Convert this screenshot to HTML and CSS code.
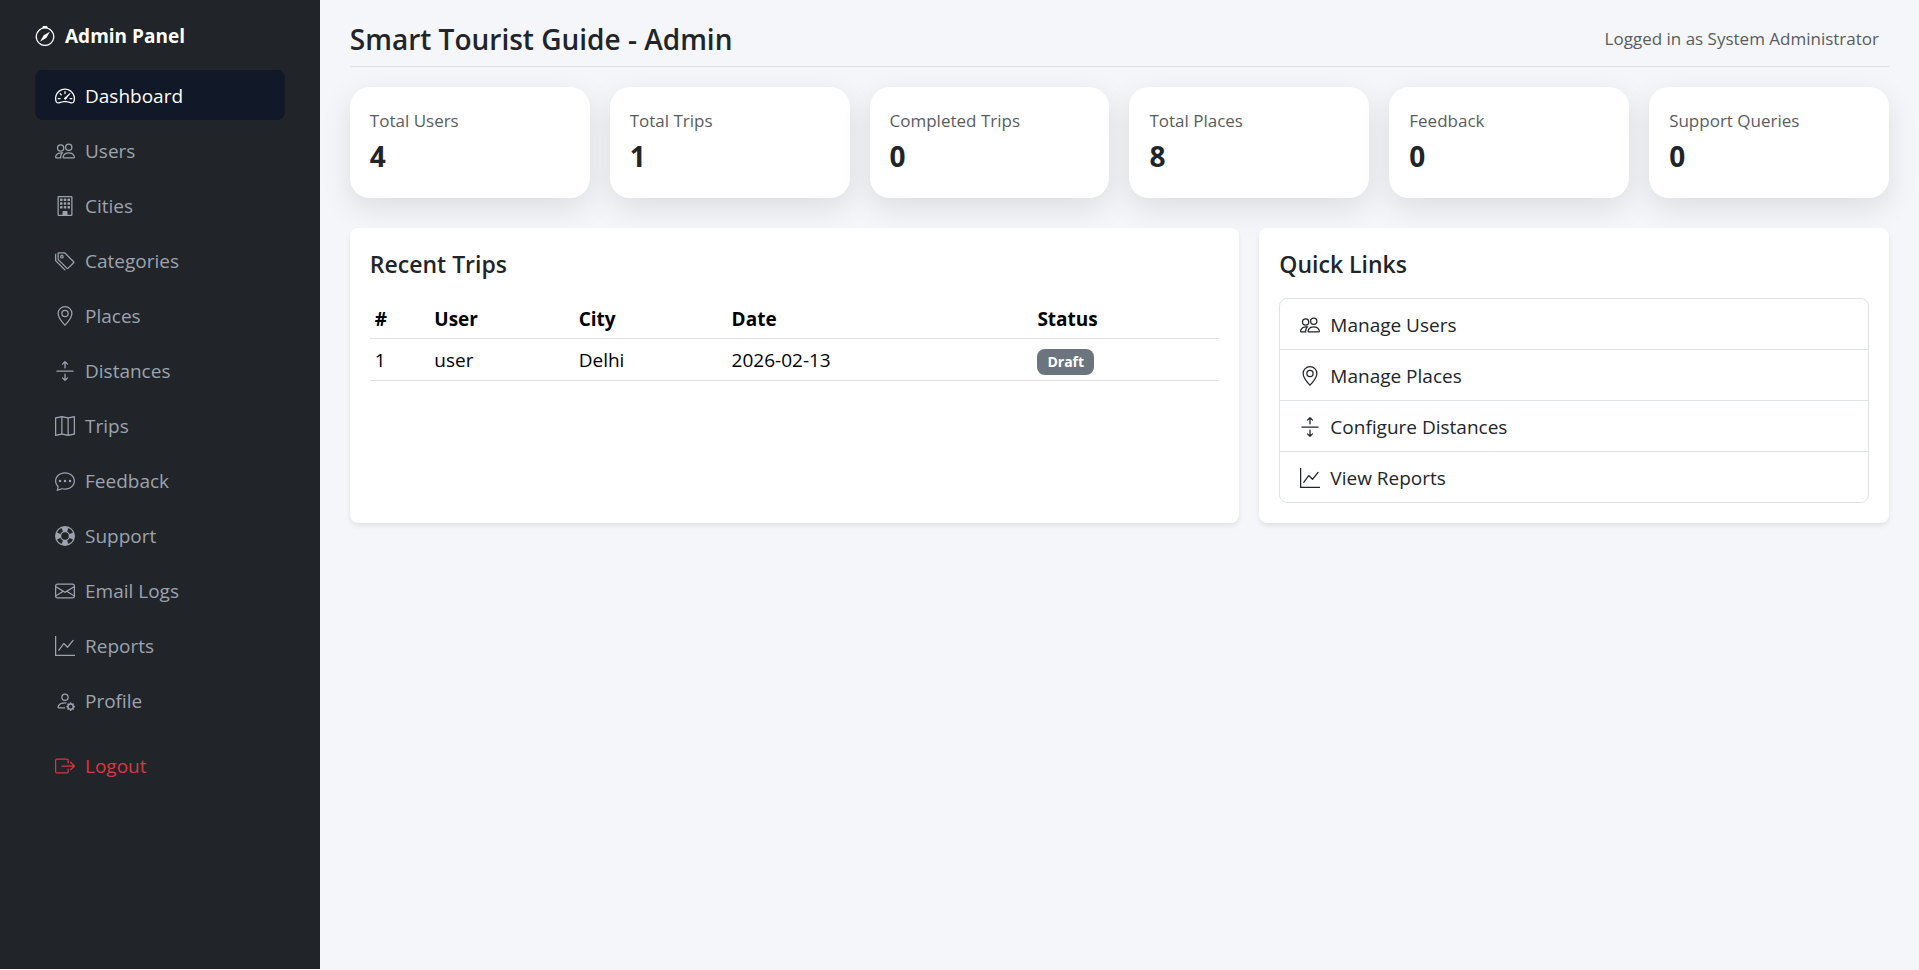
FILE: index.html
```
<!DOCTYPE html>
<html lang="en">
<head>
	<meta charset="UTF-8">
	<meta name="viewport" content="width=device-width, initial-scale=1">
	<title>Smart Tourist Guide - Admin</title>
	<link rel="stylesheet" href="styles.css">
</head>
<body>
	<!-- icon sprite -->
	<svg class="sprite" xmlns="http://www.w3.org/2000/svg">
		<symbol id="compass" viewBox="0 0 16 16">
			<path d="M8 16.016a7.5 7.5 0 0 0 1.962-14.74A1 1 0 0 0 9 0H7a1 1 0 0 0-.962 1.276A7.5 7.5 0 0 0 8 16.016m6.5-7.5a6.5 6.5 0 1 1-13 0 6.5 6.5 0 0 1 13 0"/>
			<path d="m6.94 7.44 4.95-2.83-2.83 4.95-4.949 2.83 2.828-4.95z"/>
		</symbol>
		<symbol id="speedometer" viewBox="0 0 16 16">
			<path d="M8 4a.5.5 0 0 1 .5.5V6a.5.5 0 0 1-1 0V4.5A.5.5 0 0 1 8 4M3.732 5.732a.5.5 0 0 1 .707 0l.915.914a.5.5 0 1 1-.708.708l-.914-.915a.5.5 0 0 1 0-.707M2 10a.5.5 0 0 1 .5-.5h1.586a.5.5 0 0 1 0 1H2.5A.5.5 0 0 1 2 10m9.5 0a.5.5 0 0 1 .5-.5h1.5a.5.5 0 0 1 0 1H12a.5.5 0 0 1-.5-.5m.754-4.246a.39.39 0 0 0-.527-.02L7.547 9.31a.91.91 0 1 0 1.302 1.258l3.434-4.297a.39.39 0 0 0-.029-.518z"/>
			<path fill-rule="evenodd" d="M0 10a8 8 0 1 1 15.547 2.661c-.442 1.253-1.845 1.602-2.932 1.25C11.309 13.488 9.475 13 8 13c-1.474 0-3.31.488-4.615.911-1.087.352-2.49.003-2.932-1.25A8 8 0 0 1 0 10m8-7a7 7 0 0 0-6.603 9.329c.203.575.923.876 1.68.63C4.397 12.533 6.358 12 8 12s3.604.532 4.923.96c.757.245 1.477-.056 1.68-.631A7 7 0 0 0 8 3"/>
		</symbol>
		<symbol id="people" viewBox="0 0 16 16">
			<path d="M15 14s1 0 1-1-1-4-5-4-5 3-5 4 1 1 1 1zm-7.978-1L7 12.996c.001-.264.167-1.03.76-1.72C8.312 10.629 9.282 10 11 10c1.717 0 2.687.63 3.24 1.276.593.69.758 1.457.76 1.72l-.008.002-.014.002zM11 7a2 2 0 1 0 0-4 2 2 0 0 0 0 4m3-2a3 3 0 1 1-6 0 3 3 0 0 1 6 0M6.936 9.28a6 6 0 0 0-1.23-.247A7 7 0 0 0 5 9c-4 0-5 3-5 4q0 1 1 1h4.216A2.24 2.24 0 0 1 5 13c0-1.01.377-2.042 1.09-2.904.243-.294.526-.569.846-.816M4.92 10A5.5 5.5 0 0 0 4 13H1c0-.26.164-1.03.76-1.724.545-.636 1.492-1.256 3.16-1.275ZM1.5 5.5a3 3 0 1 1 6 0 3 3 0 0 1-6 0m3-2a2 2 0 1 0 0 4 2 2 0 0 0 0-4"/>
		</symbol>
		<symbol id="building" viewBox="0 0 16 16">
			<path fill-rule="evenodd" d="M2 1a1 1 0 0 1 1-1h10a1 1 0 0 1 1 1v14a1 1 0 0 1-1 1H3a1 1 0 0 1-1-1zm11 0H3v14h3v-2.5a.5.5 0 0 1 .5-.5h3a.5.5 0 0 1 .5.5V15h3z"/>
			<rect x="4" y="2" width="2" height="2" rx=".5"/><rect x="7" y="2" width="2" height="2" rx=".5"/><rect x="10" y="2" width="2" height="2" rx=".5"/>
			<rect x="4" y="5" width="2" height="2" rx=".5"/><rect x="7" y="5" width="2" height="2" rx=".5"/><rect x="10" y="5" width="2" height="2" rx=".5"/>
			<rect x="4" y="8" width="2" height="2" rx=".5"/><rect x="7" y="8" width="2" height="2" rx=".5"/><rect x="10" y="8" width="2" height="2" rx=".5"/>
		</symbol>
		<symbol id="tags" viewBox="0 0 16 16">
			<path d="M3 2v4.586l7 7L14.586 9l-7-7zM2 2a1 1 0 0 1 1-1h4.586a1 1 0 0 1 .707.293l7 7a1 1 0 0 1 0 1.414l-4.586 4.586a1 1 0 0 1-1.414 0l-7-7A1 1 0 0 1 2 6.586z"/>
			<path d="M5.5 5a.5.5 0 1 1 0-1 .5.5 0 0 1 0 1m0 1a1.5 1.5 0 1 0 0-3 1.5 1.5 0 0 0 0 3M1 7.086a1 1 0 0 0 .293.707L8.75 15.25l-.043.043a1 1 0 0 1-1.414 0l-7-7A1 1 0 0 1 0 7.586V3a1 1 0 0 1 1-1z"/>
		</symbol>
		<symbol id="geo" viewBox="0 0 16 16">
			<path d="M12.166 8.94c-.524 1.062-1.234 2.12-1.96 3.07A32 32 0 0 1 8 14.58a32 32 0 0 1-2.206-2.57c-.726-.95-1.436-2.008-1.96-3.07C3.304 7.867 3 6.862 3 6a5 5 0 0 1 10 0c0 .862-.305 1.867-.834 2.94M8 16s6-5.686 6-10A6 6 0 0 0 2 6c0 4.314 6 10 6 10"/>
			<path d="M8 8a2 2 0 1 1 0-4 2 2 0 0 1 0 4m0 1a3 3 0 1 0 0-6 3 3 0 0 0 0 6"/>
		</symbol>
		<symbol id="expand" viewBox="0 0 16 16">
			<path d="M1 8a.5.5 0 0 1 .5-.5h13a.5.5 0 0 1 0 1h-13A.5.5 0 0 1 1 8M7.646.146a.5.5 0 0 1 .708 0l2 2a.5.5 0 0 1-.708.708L8.5 1.707V5.5a.5.5 0 0 1-1 0V1.707L6.354 2.854a.5.5 0 1 1-.708-.708zM8 10a.5.5 0 0 1 .5.5v3.793l1.146-1.147a.5.5 0 0 1 .708.708l-2 2a.5.5 0 0 1-.708 0l-2-2a.5.5 0 0 1 .708-.708L7.5 14.293V10.5A.5.5 0 0 1 8 10"/>
		</symbol>
		<symbol id="map" viewBox="0 0 16 16">
			<path fill-rule="evenodd" d="M15.817.113A.5.5 0 0 1 16 .5v14a.5.5 0 0 1-.402.49l-5 1a.5.5 0 0 1-.196 0L5.5 15.01l-4.902.98A.5.5 0 0 1 0 15.5v-14a.5.5 0 0 1 .402-.49l5-1a.5.5 0 0 1 .196 0L10.5.99l4.902-.98a.5.5 0 0 1 .415.103M10 1.91l-4-.8v12.98l4 .8zm1 12.98 4-.8V1.11l-4 .8zm-6-.8V1.11l-4 .8v12.98z"/>
		</symbol>
		<symbol id="chat" viewBox="0 0 16 16">
			<path d="M5 8a1 1 0 1 1-2 0 1 1 0 0 1 2 0m4 0a1 1 0 1 1-2 0 1 1 0 0 1 2 0m3 1a1 1 0 1 0 0-2 1 1 0 0 0 0 2"/>
			<path d="m2.165 15.803.02-.004c1.83-.363 2.948-.842 3.468-1.105A9 9 0 0 0 8 15c4.418 0 8-3.134 8-7s-3.582-7-8-7-8 3.134-8 7c0 1.76.743 3.37 1.97 4.6a10.4 10.4 0 0 1-.524 2.318l-.003.011a11 11 0 0 1-.244.637c-.079.186.074.394.273.362a22 22 0 0 0 .693-.125m.8-3.108a1 1 0 0 0-.287-.801C1.618 10.83 1 9.468 1 8c0-3.192 3.004-6 7-6s7 2.808 7 6-3.004 6-7 6a8 8 0 0 1-2.088-.272 1 1 0 0 0-.711.074c-.387.196-1.24.57-2.634.893a11 11 0 0 0 .398-2"/>
		</symbol>
		<symbol id="preserver" viewBox="0 0 16 16">
			<path fill-rule="evenodd" d="M8 16A8 8 0 1 0 8 0a8 8 0 0 0 0 16m6.43-5.228a7.03 7.03 0 0 1-3.658 3.658l-1.115-2.788a4 4 0 0 0 1.985-1.985zM5.228 14.43a7.03 7.03 0 0 1-3.658-3.658l2.788-1.115a4 4 0 0 0 1.985 1.985zm9.202-9.202-2.788 1.115a4 4 0 0 0-1.985-1.985l1.115-2.788a7.03 7.03 0 0 1 3.658 3.658m-8.087-.87a4 4 0 0 0-1.985 1.985L1.57 5.228A7.03 7.03 0 0 1 5.228 1.57zM8 11a3 3 0 1 1 0-6 3 3 0 0 1 0 6"/>
		</symbol>
		<symbol id="envelope" viewBox="0 0 16 16">
			<path fill-rule="evenodd" d="M0 4a2 2 0 0 1 2-2h12a2 2 0 0 1 2 2v8a2 2 0 0 1-2 2H2a2 2 0 0 1-2-2zm2-1a1 1 0 0 0-1 1v.217l7 4.2 7-4.2V4a1 1 0 0 0-1-1zm13 2.383-4.708 2.825L15 11.105zm-.034 6.876-5.64-3.471L8 9.583l-1.326-.795-5.64 3.47A1 1 0 0 0 2 13h12a1 1 0 0 0 .966-.741M1 11.105l4.708-2.897L1 5.383z"/>
		</symbol>
		<symbol id="graph" viewBox="0 0 16 16">
			<path d="M0 0h1v15h15v1H0zm14.817 3.113a.5.5 0 0 1 .07.704l-4.5 5.5a.5.5 0 0 1-.74.037L7.06 6.767l-3.656 5.027a.5.5 0 0 1-.808-.588l4-5.5a.5.5 0 0 1 .758-.06l2.609 2.61 4.15-5.073a.5.5 0 0 1 .704-.07"/>
		</symbol>
		<symbol id="person" viewBox="0 0 16 16">
			<path d="M11 5a3 3 0 1 1-6 0 3 3 0 0 1 6 0M8 7a2 2 0 1 0 0-4 2 2 0 0 0 0 4m.256 7a4.5 4.5 0 0 1-.229-1.004H3c.001-.246.154-.986.832-1.664C4.484 10.68 5.711 10 8 10q.39 0 .74.025c.226-.341.496-.65.804-.918Q8.844 9.002 8 9c-5 0-6 3-6 4s1 1 1 1zm3.63-4.54c.18-.613 1.048-.613 1.229 0l.043.148a.64.64 0 0 0 .921.382l.136-.074c.561-.306 1.175.308.87.869l-.075.136a.64.64 0 0 0 .382.92l.149.045c.612.18.612 1.048 0 1.229l-.15.043a.64.64 0 0 0-.38.921l.074.136c.305.561-.309 1.175-.87.87l-.136-.075a.64.64 0 0 0-.92.382l-.045.149c-.18.612-1.048.612-1.229 0l-.043-.15a.64.64 0 0 0-.921-.38l-.136.074c-.561.305-1.175-.309-.87-.87l.075-.136a.64.64 0 0 0-.382-.92l-.148-.045c-.613-.18-.613-1.048 0-1.229l.148-.043a.64.64 0 0 0 .382-.921l-.074-.136c-.306-.561.308-1.175.869-.87l.136.075a.64.64 0 0 0 .92-.382zM14 12.5a1.5 1.5 0 1 0-3 0 1.5 1.5 0 0 0 3 0"/>
		</symbol>
		<symbol id="logout" viewBox="0 0 16 16">
			<path d="M10 12.5a.5.5 0 0 1-.5.5h-8a.5.5 0 0 1-.5-.5v-9a.5.5 0 0 1 .5-.5h8a.5.5 0 0 1 .5.5v2a.5.5 0 0 0 1 0v-2A1.5 1.5 0 0 0 9.5 2h-8A1.5 1.5 0 0 0 0 3.5v9A1.5 1.5 0 0 0 1.5 14h8a1.5 1.5 0 0 0 1.5-1.5v-2a.5.5 0 0 0-1 0z"/>
			<path d="M15.854 8.354a.5.5 0 0 0 0-.708l-3-3a.5.5 0 0 0-.708.708L14.293 7.5H5.5a.5.5 0 0 0 0 1h8.793l-2.147 2.146a.5.5 0 0 0 .708.708z"/>
		</symbol>
	</svg>

	<div class="layout">
		<nav class="sidebar">
			<div class="brand"><svg class="icon"><use href="#compass"/></svg>Admin Panel</div>
			<ul class="menu">
				<li><a class="active" href="#"><svg class="icon"><use href="#speedometer"/></svg>Dashboard</a></li>
				<li><a href="#"><svg class="icon"><use href="#people"/></svg>Users</a></li>
				<li><a href="#"><svg class="icon"><use href="#building"/></svg>Cities</a></li>
				<li><a href="#"><svg class="icon"><use href="#tags"/></svg>Categories</a></li>
				<li><a href="#"><svg class="icon"><use href="#geo"/></svg>Places</a></li>
				<li><a href="#"><svg class="icon"><use href="#expand"/></svg>Distances</a></li>
				<li><a href="#"><svg class="icon"><use href="#map"/></svg>Trips</a></li>
				<li><a href="#"><svg class="icon"><use href="#chat"/></svg>Feedback</a></li>
				<li><a href="#"><svg class="icon"><use href="#preserver"/></svg>Support</a></li>
				<li><a href="#"><svg class="icon"><use href="#envelope"/></svg>Email Logs</a></li>
				<li><a href="#"><svg class="icon"><use href="#graph"/></svg>Reports</a></li>
				<li><a href="#"><svg class="icon"><use href="#person"/></svg>Profile</a></li>
				<li class="last"><a class="logout" href="#"><svg class="icon"><use href="#logout"/></svg>Logout</a></li>
			</ul>
		</nav>

		<main class="content">
			<header class="topbar">
				<h1>Smart Tourist Guide - Admin</h1>
				<span class="login">Logged in as System Administrator</span>
			</header>

			<section class="stats">
				<div class="stat"><div class="label">Total Users</div><div class="value">4</div></div>
				<div class="stat"><div class="label">Total Trips</div><div class="value">1</div></div>
				<div class="stat"><div class="label">Completed Trips</div><div class="value">0</div></div>
				<div class="stat"><div class="label">Total Places</div><div class="value">8</div></div>
				<div class="stat"><div class="label">Feedback</div><div class="value">0</div></div>
				<div class="stat"><div class="label">Support Queries</div><div class="value">0</div></div>
			</section>

			<div class="panels">
				<section class="panel trips">
					<h2>Recent Trips</h2>
					<table>
						<thead>
							<tr>
								<th class="col-id">#</th>
								<th class="col-user">User</th>
								<th class="col-city">City</th>
								<th class="col-date">Date</th>
								<th>Status</th>
							</tr>
						</thead>
						<tbody>
							<tr>
								<td>1</td>
								<td>user</td>
								<td>Delhi</td>
								<td>2026-02-13</td>
								<td><span class="badge">Draft</span></td>
							</tr>
						</tbody>
					</table>
				</section>

				<section class="panel links">
					<h2>Quick Links</h2>
					<div class="list">
						<a href="#"><svg class="icon"><use href="#people"/></svg>Manage Users</a>
						<a href="#"><svg class="icon"><use href="#geo"/></svg>Manage Places</a>
						<a href="#"><svg class="icon"><use href="#expand"/></svg>Configure Distances</a>
						<a href="#"><svg class="icon"><use href="#graph"/></svg>View Reports</a>
					</div>
				</section>
			</div>
		</main>
	</div>
</body>
</html>
```
FILE: styles.css
```
* {
	margin: 0;
	padding: 0;
	box-sizing: border-box;
}

body {
	font-family: "Segoe UI", "Open Sans", "Noto Sans", sans-serif;
	font-size: 19px;
	line-height: 30px;
	color: #212529;
	background-color: #f4f6fa;
}

a {
	text-decoration: none;
}

ul {
	list-style: none;
}

.sprite {
	display: none;
}

.icon {
	width: 20px;
	height: 20px;
	flex: none;
	fill: currentColor;
}

.layout {
	display: flex;
	min-height: calc(100vh - 1px);
}

/* sidebar */
.sidebar {
	width: 16.6667%;
	flex: none;
	padding: 21px 35px;
	background-color: #212529;
}

.brand {
	display: flex;
	align-items: center;
	gap: 10px;
	margin-bottom: 19px;
	font-weight: 700;
	color: #fff;
}

.menu li {
	margin-bottom: 5px;
}

.menu a {
	display: flex;
	align-items: center;
	gap: 10px;
	padding: 11px 20px 9px;
	border-radius: 8px;
	color: #9ca3af;
}

.menu a.active {
	color: #fff;
	background-color: #111827;
}

.menu a.logout {
	color: #dc3545;
}

.menu .last {
	margin-top: 15px;
}

/* content */
.content {
	flex: 1;
	min-width: 0;
	padding: 21px 30px;
}

.topbar {
	display: flex;
	justify-content: space-between;
	align-items: center;
	padding-bottom: 9px;
	margin-bottom: 20px;
	border-bottom: 1px solid #dee2e6;
}

.topbar h1 {
	font-size: 28px;
	font-weight: 600;
	line-height: 36px;
}

.login {
	padding-right: 10px;
	font-size: 17px;
	color: #595c5f;
}

.stats,
.panels {
	display: grid;
	grid-template-columns: repeat(12, 1fr);
	gap: 20px;
}

.stats {
	margin-bottom: 30px;
}

.stat {
	grid-column: span 2;
	padding: 21px 20px 19px;
	border-radius: 20px;
	background-color: #fff;
	box-shadow: 0 10px 30px rgba(0, 0, 0, .1);
}

.stat .label {
	font-size: 17px;
	line-height: 26px;
	color: #595c5f;
}

.stat .value {
	font-size: 28px;
	font-weight: 700;
	line-height: 45px;
}

.panel {
	padding: 21px 20px 20px;
	border-radius: 8px;
	background-color: #fff;
	box-shadow: 0 3px 5px rgba(0, 0, 0, .08);
}

.panel h2 {
	margin-bottom: 19px;
	font-size: 23px;
	font-weight: 600;
	line-height: 30px;
}

.trips {
	grid-column: span 7;
}

.links {
	grid-column: span 5;
}

table {
	width: 100%;
	border-collapse: collapse;
	table-layout: fixed;
	color: #000;
}

th,
td {
	padding: 6px 5px 5px;
	text-align: left;
	border-bottom: 1px solid #dee2e6;
}

th {
	padding-bottom: 4px;
}

.col-id {
	width: 7%;
}

.col-user {
	width: 17%;
}

.col-city {
	width: 18%;
}

.col-date {
	width: 36%;
}

.badge {
	display: inline-block;
	padding: 5px 10px;
	border-radius: 8px;
	font-size: 14px;
	font-weight: 700;
	line-height: 16px;
	color: #fff;
	background-color: #6c757d;
}

.list {
	border: 1px solid #dee2e6;
	border-radius: 8px;
}

.list a {
	display: flex;
	align-items: center;
	gap: 10px;
	padding: 11px 20px 9px;
	color: #212529;
}

.list a + a {
	border-top: 1px solid #dee2e6;
}
```
